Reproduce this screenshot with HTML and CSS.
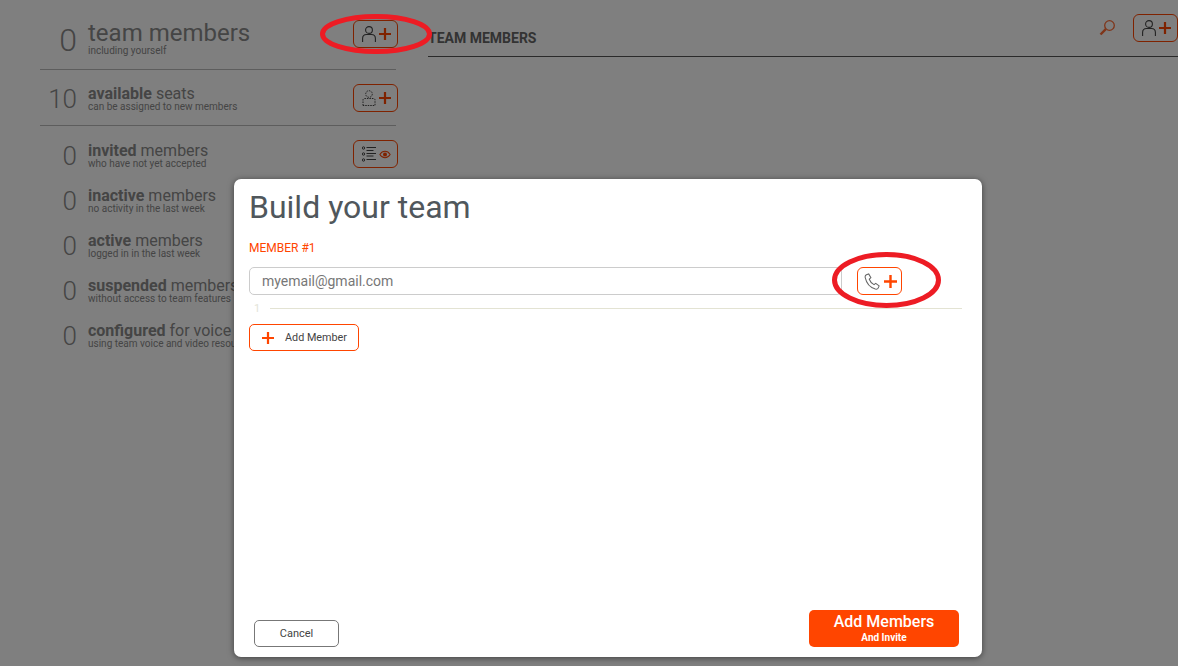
FILE: index.html
```html
<!DOCTYPE html>
<html lang="en">
<head>
<meta charset="utf-8">
<title>Build your team</title>
<link rel="stylesheet" href="styles.css">
</head>
<body>
<svg width="0" height="0" class="defs">
  <symbol id="person" viewBox="0 0 14 16"><circle cx="7" cy="4" r="3.400" fill="none" stroke="currentColor" stroke-width="1.100"/><path d="M.6 16v-3.500c0-2.500 1.600-4 4-4h4.800c2.400 0 4 1.500 4 4V16" fill="none" stroke="currentColor" stroke-width="1.100"/></symbol>
  <symbol id="plus" viewBox="0 0 14 14"><path d="M7 0v14M0 7h14" stroke="currentColor" stroke-width="2.600" fill="none"/></symbol>
</svg>
<div class="page">
  <aside class="stats">
    <div class="row row-main">
      <span class="num">0</span>
      <div class="label"><div class="title title-big">team members</div><div class="sub">including yourself</div></div>
      <button class="icon-btn"><svg class="ic-person"><use href="#person"/></svg><svg class="ic-plus"><use href="#plus"/></svg></button>
    </div>
    <div class="row row-seats">
      <span class="num">10</span>
      <div class="label"><div class="title"><b>available</b> seats</div><div class="sub">can be assigned to new members</div></div>
      <button class="icon-btn"><svg class="ic-person" viewBox="0 0 14 16"><circle cx="7" cy="4" r="3.300" fill="none" stroke="currentColor" stroke-width="1" stroke-dasharray="1.500 1"/><path d="M1 15.500V10c0-.8.700-1.500 1.500-1.500h9c.8 0 1.500.7 1.500 1.500v5.500z" fill="none" stroke="currentColor" stroke-width="1" stroke-dasharray="1.500 1"/></svg><svg class="ic-plus"><use href="#plus"/></svg></button>
    </div>
    <div class="row row-small row-invited">
      <span class="num">0</span>
      <div class="label"><div class="title"><b>invited</b> members</div><div class="sub">who have not yet accepted</div></div>
      <button class="icon-btn"><svg class="ic-person" viewBox="0 0 14 16"><g fill="none" stroke="currentColor"><circle cx="1.500" cy="2" r="1.200"/><circle cx="1.500" cy="8" r="1.200"/><circle cx="1.500" cy="14" r="1.200"/><path d="M4.500 1.500H14M4.500 4.500h7M4.500 7.500H14M4.500 10h7M4.500 13.500H14" stroke-width="1"/></g></svg><svg class="ic-eye" viewBox="0 0 14 10"><path d="M1 5c3-5 9-5 12 0-3 5-9 5-12 0z" fill="none" stroke="currentColor" stroke-width="1.200"/><circle cx="7" cy="5" r="2.300" fill="currentColor"/></svg></button>
    </div>
    <div class="row row-small">
      <span class="num">0</span>
      <div class="label"><div class="title"><b>inactive</b> members</div><div class="sub">no activity in the last week</div></div>
    </div>
    <div class="row row-small">
      <span class="num">0</span>
      <div class="label"><div class="title"><b>active</b> members</div><div class="sub">logged in in the last week</div></div>
    </div>
    <div class="row row-small">
      <span class="num">0</span>
      <div class="label"><div class="title"><b>suspended</b> members</div><div class="sub">without access to team features</div></div>
    </div>
    <div class="row row-small">
      <span class="num">0</span>
      <div class="label"><div class="title"><b>configured</b> for voice</div><div class="sub">using team voice and video resources</div></div>
    </div>
  </aside>
  <main class="content">
    <header class="content-head">
      <h2 class="content-title">TEAM MEMBERS</h2>
      <svg class="ic-search" viewBox="0 0 18 18"><circle cx="11.500" cy="6.500" r="4.800" fill="none" stroke="currentColor" stroke-width="1.300"/><path d="M7.800 10.200 2.500 15.500" stroke="currentColor" stroke-width="2.400" fill="none"/></svg>
      <button class="icon-btn"><svg class="ic-person"><use href="#person"/></svg><svg class="ic-plus"><use href="#plus"/></svg></button>
    </header>
  </main>
</div>
<div class="overlay"></div>
<section class="modal">
  <h1 class="modal-title">Build your team</h1>
  <div class="member-label">MEMBER #1</div>
  <div class="member-row">
    <div class="email">myemail@gmail.com</div>
    <button class="icon-btn icon-btn-light"><svg class="ic-phone" viewBox="0 0 18 18"><path d="M2.500 1.800 5 1l2.300 4-1.700 1.600c.8 2.300 2.700 4.600 5 5.700l1.800-1.300 3.600 2.700-1 2.300c-.5 1-1.700 1.300-3 1C6.500 15.500 2.500 10.500 1.300 5c-.3-1.300.2-2.600 1.200-3.200z" fill="none" stroke="currentColor" stroke-width="1.100"/></svg><svg class="ic-plus-light"><use href="#plus"/></svg></button>
  </div>
  <div class="count-row"><span class="count">1</span><span class="count-line"></span></div>
  <button class="add-member"><svg class="ic-plus-wide"><use href="#plus"/></svg><span>Add Member</span></button>
  <footer class="modal-foot">
    <button class="cancel">Cancel</button>
    <button class="submit"><span class="submit-main">Add Members</span><span class="submit-sub">And Invite</span></button>
  </footer>
</section>
<svg class="marks" width="1178" height="666" viewBox="0 0 1178 666">
  <ellipse cx="376" cy="34" rx="53.500" ry="17.500" fill="none" stroke="#ed1c24" stroke-width="5"/>
  <ellipse cx="886.500" cy="280" rx="52" ry="25.500" fill="none" stroke="#ed1c24" stroke-width="5"/>
</svg>
</body>
</html>
```
FILE: styles.css
```css
* { box-sizing: border-box; }
html, body { margin: 0; height: 100%; }
body {
  width: 1178px;
  height: 666px;
  overflow: hidden;
  background: #fff;
  font-family: Roboto, "Liberation Sans", sans-serif;
  color: #999;
}
.defs { position: absolute; }
.page { display: flex; height: 666px; }
.stats { width: 428px; flex: none; padding-left: 40px; padding-right: 32px; }
.row { display: flex; align-items: center; position: relative; white-space: nowrap; }
.row-main { height: 70px; padding-top: 9px; border-bottom: 1px solid #bbb; }
.row-seats { height: 56px; border-bottom: 1px solid #bbb; }
.row-small { height: 45px; }
.row-invited { height: 52px; padding-top: 6px; }
.num {
  width: 37px;
  flex: none;
  padding-top: 1px;
  text-align: right;
  font-size: 26px;
  line-height: 30px;
  font-weight: 300;
  color: #8a8a8a;
}
.row-seats .num { padding-top: 3px; }
.row-main .num { font-size: 32px; }
.label { margin-left: 11px; padding-top: 2px; flex: 1; min-width: 0; }
.row-main .label { padding-top: 0; }
.row-seats .label, .row-invited .label { padding-top: 4px; }
.title { font-size: 16px; line-height: 14px; color: #8a8a8a; }
.title b { font-weight: 700; }
.title-big { font-size: 24px; line-height: 24px; font-weight: 400; }
.sub { font-size: 10px; line-height: 12px; color: #8a8a8a; }
.icon-btn {
  display: flex;
  align-items: center;
  justify-content: center;
  gap: 3px;
  width: 45px;
  height: 28px;
  flex: none;
  padding: 0 0 0 2px;
  background: #fff;
  border: 1px solid #ff4500;
  border-radius: 6px;
  color: #444;
}
.row .icon-btn { position: absolute; left: 313px; top: 20px; }
.row-seats .icon-btn { top: 14px; }
.row-invited .icon-btn { top: 14px; }
.ic-person { width: 14px; height: 16px; color: #444; }
.ic-plus { width: 12px; height: 12px; color: #ff4500; }
.ic-plus-light { width: 13px; height: 13px; color: #ff4500; }
.ic-eye { width: 12px; height: 9px; color: #ff4500; }
.ic-phone { width: 17px; height: 17px; color: #666; }
.content { flex: 1; min-width: 0; }
.content-head {
  display: flex;
  align-items: flex-start;
  height: 57px;
  border-bottom: 1px solid #555;
}
.content-title { margin: 30px 0 0; font-size: 14px; line-height: 16px; font-weight: 700; color: #666; flex: 1; }
.ic-search { width: 18px; height: 18px; color: #ff6a33; margin: 19px 17px 0 0; }
.content-head .icon-btn { margin-top: 14px; }
.overlay { position: absolute; inset: 0; background: rgba(0, 0, 0, 0.5); }
.modal {
  position: absolute;
  left: 234px;
  top: 179px;
  width: 748px;
  height: 478px;
  display: flex;
  flex-direction: column;
  align-items: flex-start;
  padding: 8px 20px 10px 15px;
  background: #fff;
  border-radius: 7px;
  box-shadow: 0 1px 6px rgba(0, 0, 0, 0.5);
}
.modal-title { margin: 0; font-size: 32px; line-height: 40px; font-weight: 400; color: #50575c; }
.member-label { margin-top: 14px; font-size: 12px; line-height: 14px; color: #ff4500; }
.member-row { display: flex; margin-top: 12px; gap: 15px; width: 100%; }
.email {
  width: 593px;
  height: 28px;
  padding-left: 12px;
  font-size: 14px;
  line-height: 26px;
  color: #777;
  border: 1px solid #ccc;
  border-radius: 5px;
}
.count-row { display: flex; align-items: center; height: 26px; width: 100%; }
.count { width: 21px; padding-left: 5px; font-size: 11px; color: #e4e4d8; }
.count-line { flex: 1; height: 1px; background: #e3e3d3; }
.add-member {
  display: flex;
  align-items: center;
  width: 110px;
  height: 27px;
  margin-top: 3px;
  padding: 0 0 0 12px;
  background: #fff;
  border: 1px solid #ff4500;
  border-radius: 5px;
  font-family: inherit;
  font-size: 10.800px;
  color: #444;
}
.ic-plus-wide { width: 12px; height: 12px; color: #ff4500; margin-right: 11px; }
.modal-foot {
  display: flex;
  align-items: flex-end;
  justify-content: space-between;
  margin-top: auto;
  width: 100%;
  padding-left: 5px;
  padding-right: 3px;
}
.cancel {
  width: 85px;
  height: 27px;
  padding: 0;
  background: #fff;
  border: 1px solid #777;
  border-radius: 5px;
  font-family: inherit;
  font-size: 11px;
  color: #444;
}
.submit {
  display: flex;
  flex-direction: column;
  align-items: center;
  justify-content: center;
  width: 150px;
  height: 37px;
  padding: 0 0 1px;
  background: #ff4500;
  border: 0;
  border-radius: 5px;
  font-family: inherit;
  color: #fff;
}
.submit-main { font-size: 16px; line-height: 18px; font-weight: 500; }
.submit-sub { margin-top: 1px; font-size: 10px; line-height: 12px; font-weight: 700; }
.marks { position: absolute; left: 0; top: 0; pointer-events: none; }
```
